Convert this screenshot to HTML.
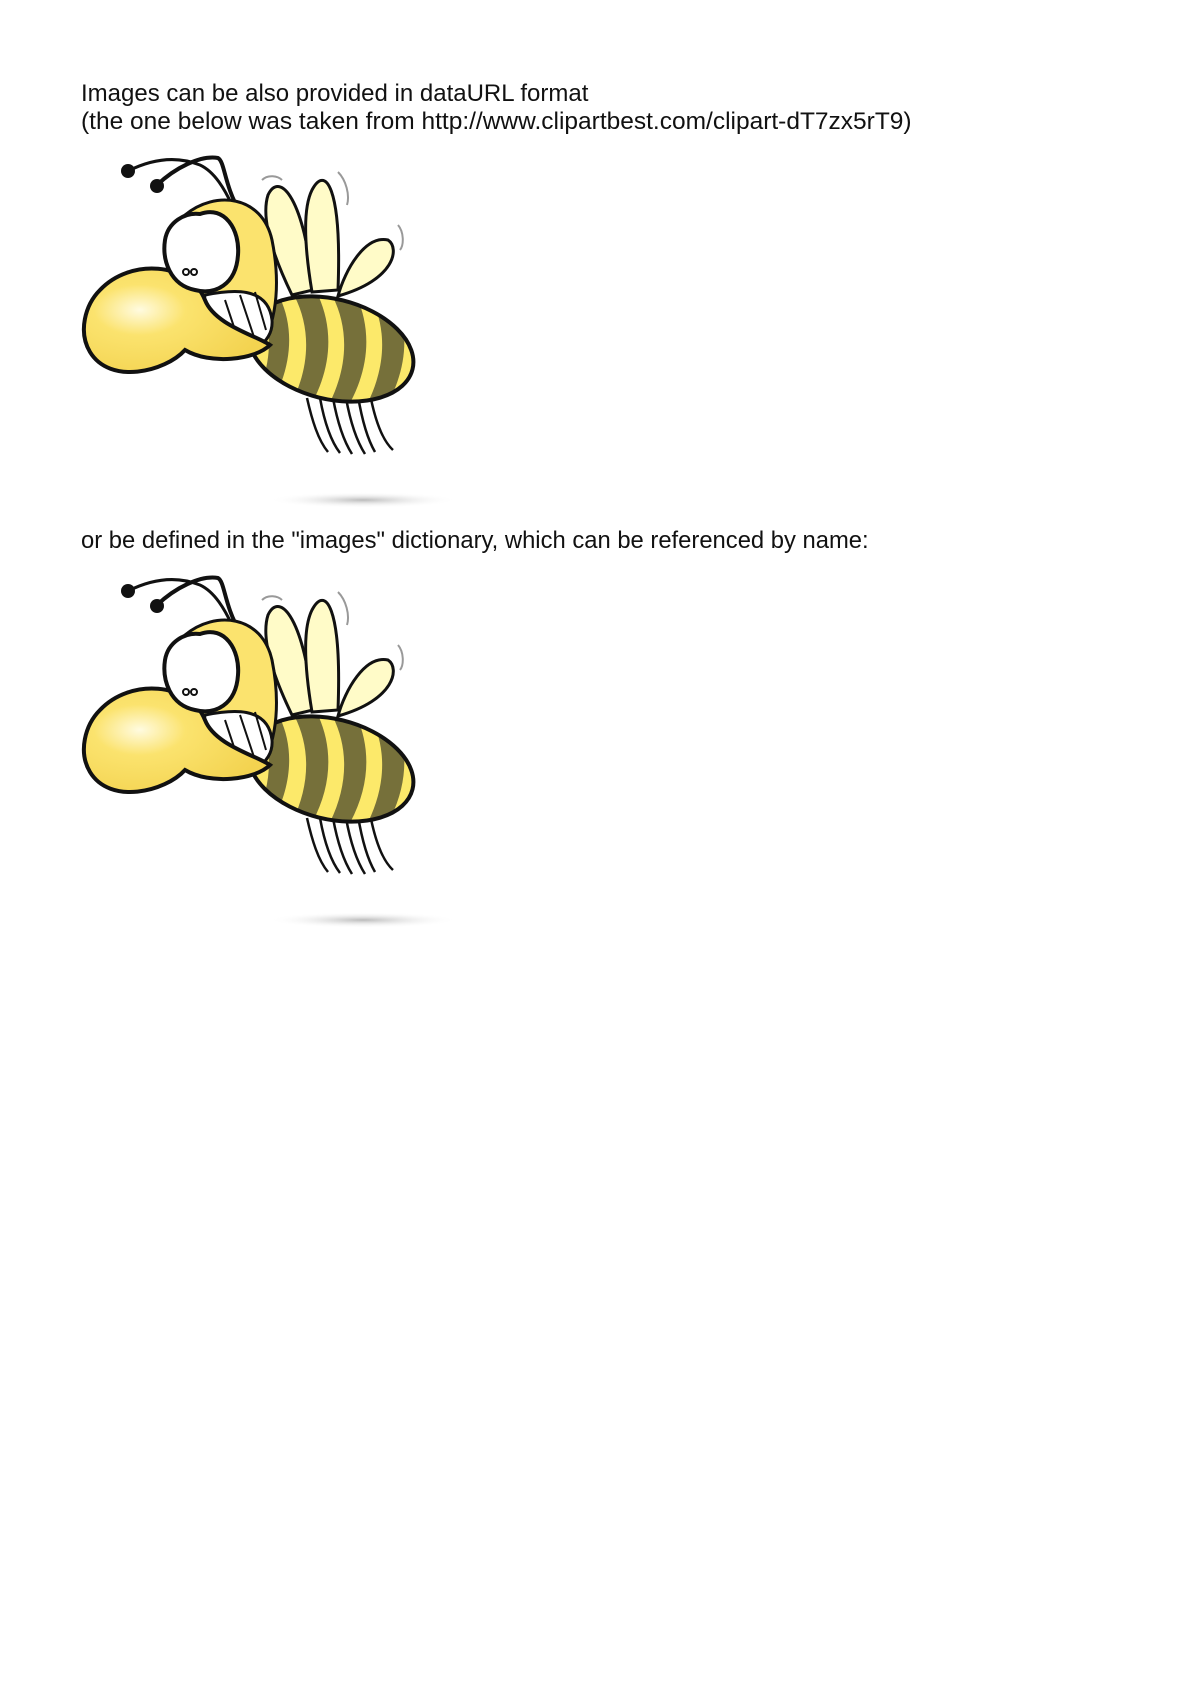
<!DOCTYPE html>
<html><head><meta charset="utf-8"><style>
html,body{margin:0;padding:0;background:#fff;width:1190px;height:1683px;overflow:hidden}
.t{position:absolute;left:81px;font-family:"Liberation Sans",Arial,sans-serif;font-size:24px;color:#111;white-space:nowrap;line-height:28px}
svg{position:absolute;left:0;top:0}
</style></head><body>
<div class="t" style="top:80px">Images can be also provided in dataURL format<br><span style="font-size:24.5px">(the one below was taken from http://www.clipartbest.com/clipart-dT7zx5rT9)</span></div>
<div class="t" style="top:527px;font-size:23.8px">or be defined in the "images" dictionary, which can be referenced by name:</div>
<svg width="1190" height="1683" viewBox="0 0 1190 1683">
<defs>
<radialGradient id="ng" cx="0.3" cy="0.4" r="0.7"><stop offset="0" stop-color="#fffbe0"/><stop offset="0.35" stop-color="#fbe36e"/><stop offset="1" stop-color="#f3d350"/></radialGradient>
<radialGradient id="sh"><stop offset="0" stop-color="#bbb"/><stop offset="1" stop-color="#fff" stop-opacity="0"/></radialGradient>
<g id="bee">
<ellipse cx="363" cy="500" rx="95" ry="8" fill="url(#sh)"/>
<path d="M128 171 C150 160 175 155 200 165 C215 172 225 190 232 205" fill="none" stroke="#111" stroke-width="3"/>
<path d="M157 185 C175 168 200 155 218 158 C225 162 224 185 240 212" fill="none" stroke="#111" stroke-width="4"/>
<circle cx="128" cy="171" r="7" fill="#111"/><circle cx="157" cy="186" r="7" fill="#111"/>
<path d="M268 195 C280 170 305 200 313 290 L292 295 C275 260 260 220 268 195Z" fill="#fffbc8" stroke="#111" stroke-width="3"/>
<path d="M312 190 C325 165 342 185 338 290 L312 292 C305 250 302 210 312 190Z" fill="#fffbc8" stroke="#111" stroke-width="3"/>
<path d="M388 240 C400 248 395 280 338 296 C345 270 365 235 388 240Z" fill="#fffbc8" stroke="#111" stroke-width="3"/>
<path d="M262 180 C268 174 278 176 282 180 M338 172 C346 180 350 195 347 205 M398 225 C404 232 404 245 400 250" fill="none" stroke="#999" stroke-width="2"/>
<path d="M307 398 C312 420 318 440 328 452 M320 398 C324 420 330 440 340 453 M333 398 C337 420 343 440 352 454 M346 398 C350 420 356 440 365 454 M358 396 C362 420 368 440 375 452 M370 394 C375 420 382 440 393 450" fill="none" stroke="#111" stroke-width="2.5"/>
<clipPath id="bc"><ellipse cx="331" cy="349" rx="84" ry="50" transform="rotate(14 331 349)"/></clipPath>
<ellipse cx="331" cy="349" rx="84" ry="50" transform="rotate(14 331 349)" fill="#fce96a"/>
<g clip-path="url(#bc)" fill="#76703a">
<path d="M258 300 C275 330 272 370 250 410 L268 410 C292 370 295 330 280 298Z"/>
<path d="M294 295 C312 330 310 370 288 410 L308 410 C332 370 334 330 318 295Z"/>
<path d="M332 295 C350 330 348 370 326 410 L346 410 C370 370 372 330 356 295Z"/>
<path d="M370 295 C388 330 386 370 364 410 L384 410 C408 370 410 330 394 295Z"/>
</g>
<ellipse cx="331" cy="349" rx="84" ry="50" transform="rotate(14 331 349)" fill="none" stroke="#111" stroke-width="4"/>
<path d="M185 215 C215 190 262 195 272 240 C282 290 275 340 250 355 L200 345 L175 260Z" fill="#fbe36e" stroke="#111" stroke-width="3"/>
<path d="M205 295 C230 290 268 285 272 320 C274 345 245 358 225 355 C205 350 200 330 205 295Z" fill="#fff" stroke="#111" stroke-width="3"/>
<path d="M225 300 L240 345 M240 295 L255 340 M255 292 L266 330" stroke="#111" stroke-width="2"/>
<path d="M100 290 C130 258 190 262 205 300 C215 325 255 335 270 345 C255 360 210 365 185 350 C165 372 110 385 90 352 C78 332 85 305 100 290Z" fill="url(#ng)" stroke="#111" stroke-width="4"/>
<path d="M200 214 C225 205 240 230 238 255 C236 285 215 295 195 290 C170 285 162 260 165 240 C168 222 185 212 200 214Z" fill="#fff" stroke="#111" stroke-width="4"/>
<circle cx="186" cy="272" r="3" fill="none" stroke="#111" stroke-width="2"/><circle cx="194" cy="272" r="3" fill="none" stroke="#111" stroke-width="2"/>
</g>
</defs>
<use href="#bee"/>
<use href="#bee" transform="translate(0,420)"/>
</svg>
</body></html>
